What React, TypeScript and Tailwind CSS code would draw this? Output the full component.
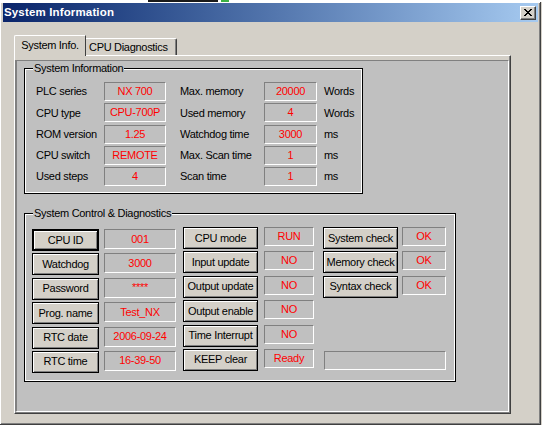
import React from "react";

const valueBox =
  "flex items-center justify-center bg-[#c0c0c0] border border-t-[#808080] border-l-[#808080] border-r-white border-b-white text-[#ff0000] leading-none";

const btnBase =
  "flex items-center justify-center bg-[#d4d0c8] text-black leading-none shadow-[inset_1px_1px_0_#ffffff,inset_-1px_-1px_0_#808080]";

function Btn({ label, w, strong }: { label: string; w: string; strong?: boolean }) {
  return (
    <div className={`${btnBase} ${w} h-[22px] ${strong ? "border-2 border-black" : "border border-black"}`}>
      {label}
    </div>
  );
}

function Group({
  title,
  className,
  children,
}: {
  title: string;
  className: string;
  children: React.ReactNode;
}) {
  return (
    <div
      className={`relative border border-black shadow-[inset_1px_1px_0_#ffffff,inset_-1px_-1px_0_#ffffff] ${className}`}
    >
      <div className="absolute -top-[8px] left-[8px] bg-[#c0c0c0] px-[1px] leading-[14px] text-black">
        {title}
      </div>
      {children}
    </div>
  );
}

const col1 = [
  ["PLC series", "NX 700"],
  ["CPU type", "CPU-700P"],
  ["ROM version", "1.25"],
  ["CPU switch", "REMOTE"],
  ["Used steps", "4"],
];

const col2 = [
  ["Max. memory", "20000", "Words"],
  ["Used memory", "4", "Words"],
  ["Watchdog time", "3000", "ms"],
  ["Max. Scan time", "1", "ms"],
  ["Scan time", "1", "ms"],
];

const pair1 = [
  ["CPU ID", "001"],
  ["Watchdog", "3000"],
  ["Password", "****"],
  ["Prog. name", "Test_NX"],
  ["RTC date", "2006-09-24"],
  ["RTC time", "16-39-50"],
];

const pair2 = [
  ["CPU mode", "RUN"],
  ["Input update", "NO"],
  ["Output update", "NO"],
  ["Output enable", "NO"],
  ["Time Interrupt", "NO"],
  ["KEEP clear", "Ready"],
];

const pair3 = [
  ["System check", "OK"],
  ["Memory check", "OK"],
  ["Syntax check", "OK"],
];

function CloseGlyph() {
  const px: [number, number][] = [
    [0, 0], [1, 0], [6, 0], [7, 0],
    [1, 1], [2, 1], [5, 1], [6, 1],
    [2, 2], [3, 2], [4, 2], [5, 2],
    [3, 3], [4, 3],
    [2, 4], [3, 4], [4, 4], [5, 4],
    [1, 5], [2, 5], [5, 5], [6, 5],
    [0, 6], [1, 6], [6, 6], [7, 6],
  ];
  return (
    <svg width="8" height="7" viewBox="0 0 8 7" shapeRendering="crispEdges">
      {px.map(([x, y], i) => (
        <rect key={i} x={x} y={y} width="1" height="1" fill="#000" />
      ))}
    </svg>
  );
}

export default function App() {
  return (
    <div className="w-[542px] h-[425px] overflow-hidden bg-[#d4d0c8] font-['Liberation_Sans',Arial,sans-serif] text-[11px] tracking-[-0.3px] text-black">
      {/* top strip */}
      <div className="flex h-[2px] bg-white">
        <div className="w-[148px]" />
        <div className="w-[70px] bg-[#1a1a1a]" />
        <div className="w-[3px]" />
        <div className="w-[8px] bg-[#3cb043]" />
      </div>
      {/* window */}
      <div className="h-[423px] w-[541px] border-r border-b border-[#404040] shadow-[inset_1px_1px_0_#ffffff,inset_-1px_-1px_0_#808080] pt-[1px] pl-[3px] pr-[2px] flex flex-col">
        {/* title bar */}
        <div className="h-[19px] flex items-center justify-between bg-linear-to-r from-[#0a246a] to-[#a6caf0]">
          <div className="pl-[1px] font-bold text-white text-[11.5px] tracking-[0.15px] leading-none">
            System Information
          </div>
          <div className="mr-[2px] w-[16px] h-[14px] flex items-center justify-center bg-[#d4d0c8] border border-t-white border-l-white border-r-[#404040] border-b-[#404040] shadow-[inset_-1px_-1px_0_#808080]">
            <CloseGlyph />
          </div>
        </div>
        {/* body */}
        <div className="pt-[13px] pl-[11px]">
          {/* tabs */}
          <div className="flex items-end h-[20px] relative z-10">
            <div className="w-[72px] h-[21px] -mb-[1px] bg-[#d4d0c8] border-t border-l border-t-white border-l-white border-r border-r-[#404040] rounded-tl-[2px] flex items-center justify-center pb-[2px]">
              System Info.
            </div>
            <div className="w-[91px] h-[17px] bg-[#d4d0c8] border-t border-t-white border-r border-r-[#404040] shadow-[inset_-1px_0_0_#808080] flex items-center pl-[3px] pt-[1px] rounded-tr-[2px]">
              CPU Diagnostics
            </div>
          </div>
          {/* panel */}
          <div className="w-[497px] h-[359px] border-t border-l border-t-white border-l-white border-r border-b border-r-[#404040] border-b-[#404040] shadow-[inset_-1px_-1px_0_#808080] pt-[4px]">
            <div className="h-[352px] w-[494px] bg-[#c0c0c0] border-t border-l-2 border-t-[#808080] border-l-[#808080] border-r border-b border-r-white border-b-white pt-[7px] pl-[7px]">
              {/* group 1 */}
              <Group title="System Information" className="w-[339px] h-[126px] pt-[13px] pl-[11px]">
                <div className="flex">
                  <div className="flex flex-col gap-[2.25px]">
                    {col1.map(([l, v]) => (
                      <div key={l} className="flex items-center h-[19px]">
                        <div className="w-[68px]">{l}</div>
                        <div className={`${valueBox} w-[62px] h-[19px]`}>{v}</div>
                      </div>
                    ))}
                  </div>
                  <div className="flex flex-col gap-[2.25px] ml-[14px]">
                    {col2.map(([l, v, u]) => (
                      <div key={l} className="flex items-center h-[19px]">
                        <div className="w-[84px]">{l}</div>
                        <div className={`${valueBox} w-[53px] h-[19px]`}>{v}</div>
                        <div className="ml-[7px]">{u}</div>
                      </div>
                    ))}
                  </div>
                </div>
              </Group>
              {/* group 2 */}
              <Group
                title="System Control & Diagnostics"
                className="mt-[19px] w-[432px] h-[169px] pt-[13px] pl-[7px]"
              >
                <div className="flex items-start">
                  <div className="flex flex-col gap-[2.4px] mt-[2px]">
                    {pair1.map(([l, v], i) => (
                      <div key={l} className="flex items-start h-[22px]">
                        <Btn label={l} w="w-[67px]" strong={i === 0} />
                        <div className={`${valueBox} ml-[5px] w-[72px] h-[20px]`}>{v}</div>
                      </div>
                    ))}
                  </div>
                  <div className="flex flex-col gap-[2.4px] ml-[7px]">
                    {pair2.map(([l, v]) => (
                      <div key={l} className="flex items-start h-[22px]">
                        <Btn label={l} w="w-[75px]" />
                        <div className={`${valueBox} ml-[6px] w-[50px] h-[19px]`}>{v}</div>
                      </div>
                    ))}
                  </div>
                  <div className="flex flex-col gap-[2.4px] ml-[9px]">
                    {pair3.map(([l, v]) => (
                      <div key={l} className="flex items-start h-[22px]">
                        <Btn label={l} w="w-[75px]" />
                        <div className={`${valueBox} ml-[4px] w-[44px] h-[19px]`}>{v}</div>
                      </div>
                    ))}
                    <div className="h-[22px]" />
                    <div className="h-[22px]" />
                    <div className="h-[22px] flex items-start">
                      <div className={`${valueBox} ml-[1px] mt-[2px] w-[122px] h-[19px]`} />
                    </div>
                  </div>
                </div>
              </Group>
            </div>
          </div>
        </div>
      </div>
    </div>
  );
}
